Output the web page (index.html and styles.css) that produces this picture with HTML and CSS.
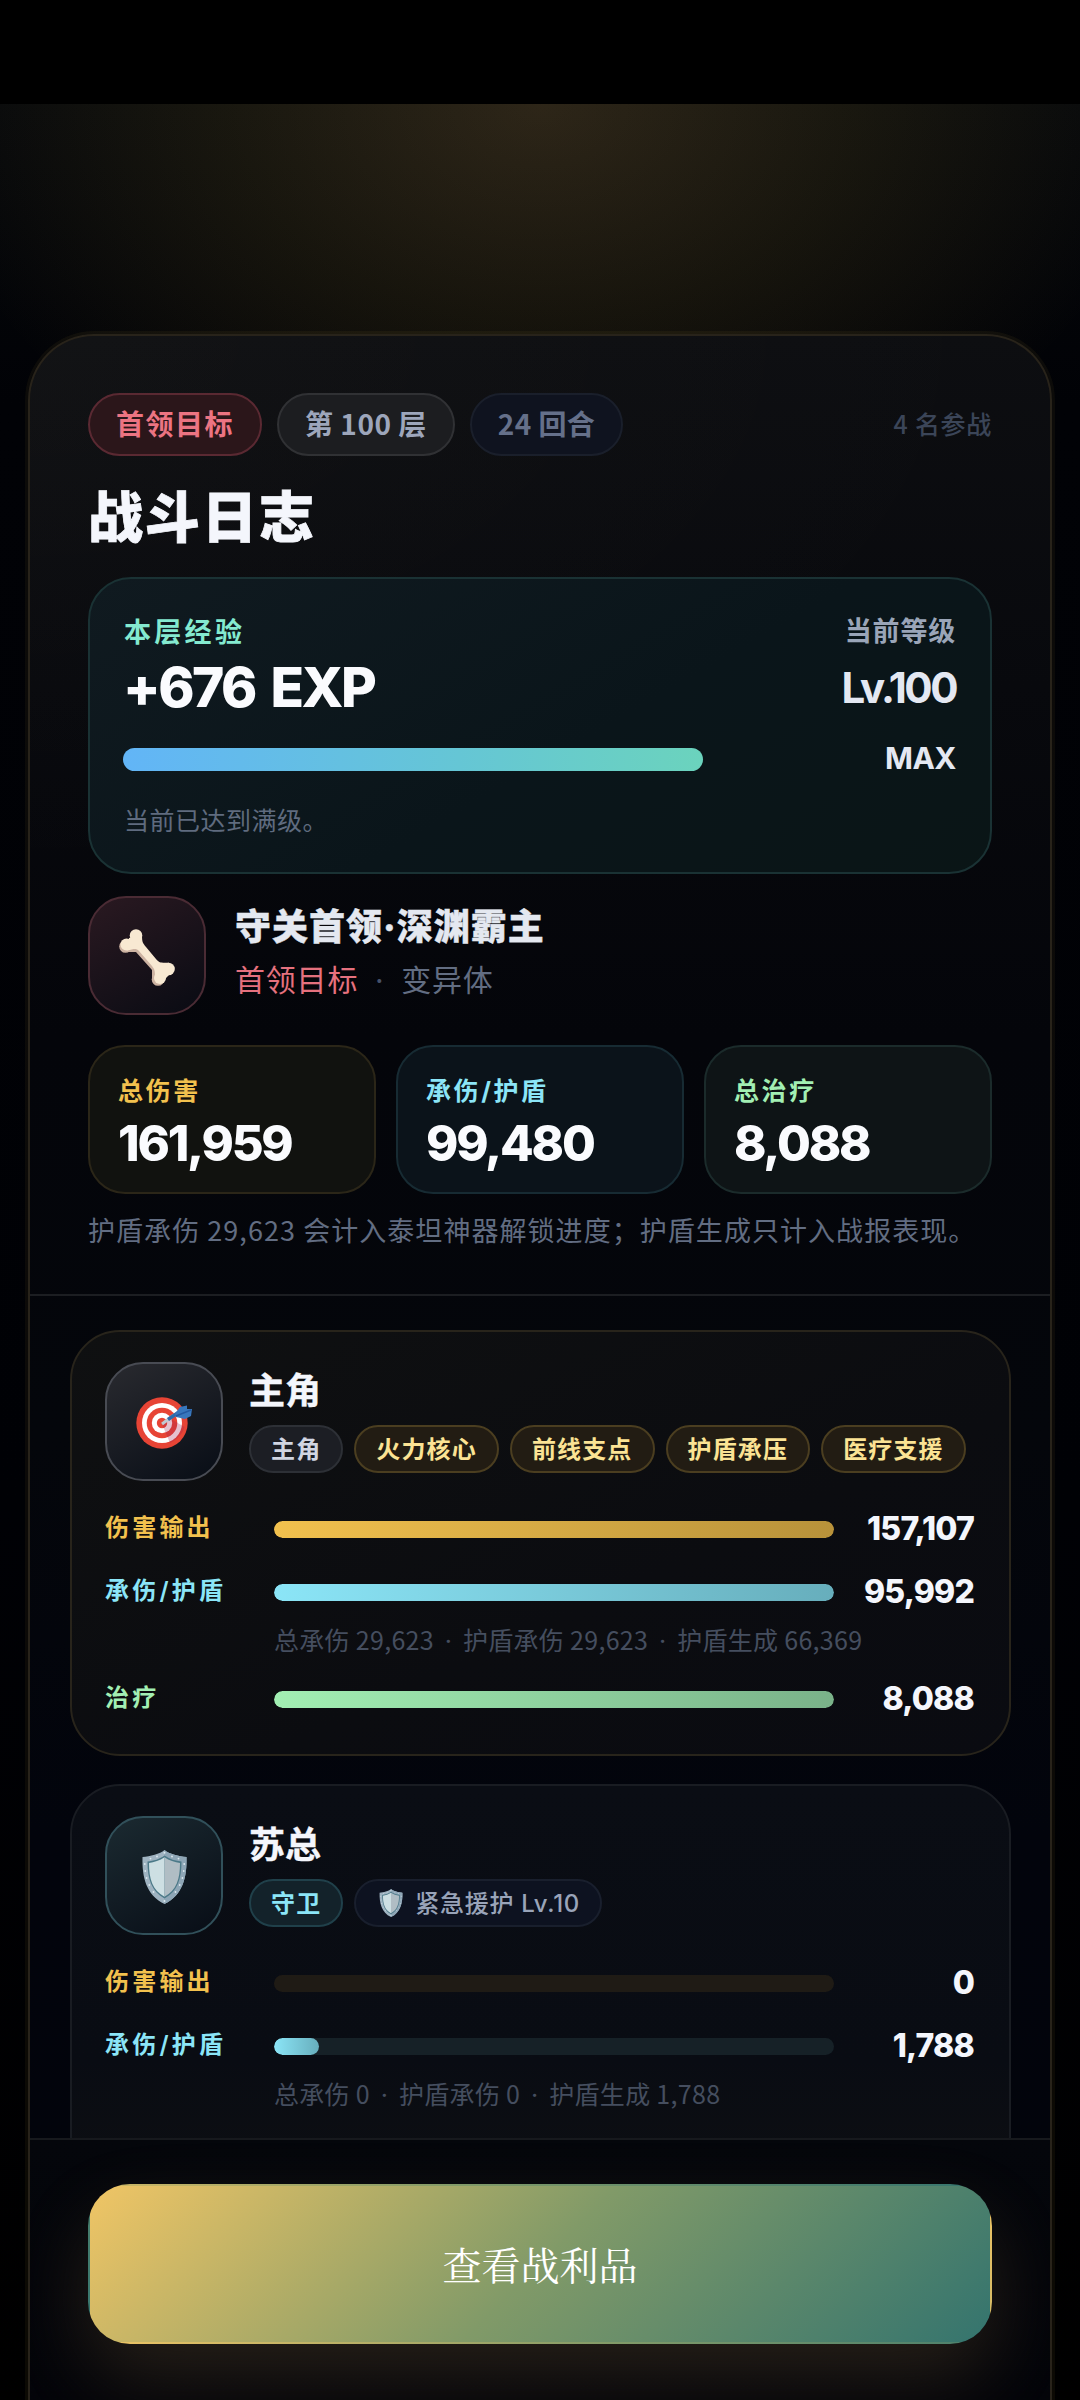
FILE: index.html
```html
<!DOCTYPE html>
<html lang="zh-CN">
<head>
<meta charset="utf-8">
<title>战斗日志</title>
<link rel="stylesheet" href="styles.css">
</head>
<body>
<svg class="defs" width="0" height="0" aria-hidden="true">
  <symbol id="shield" viewBox="0 0 45 54">
    <path d="M22.500 0C18 4 8 6.500.5 7C0 27 4 45 22.500 54C41 45 45 27 44.500 7C37 6.500 27 4 22.500 0Z" fill="#9fb3c1"/>
    <path d="M22.500 0C27 4 37 6.500 44.500 7C45 27 41 45 22.500 54Z" fill="#8ea6b6"/>
    <path d="M22.500 5.500C18 9 11 11 5.500 11.500C5.500 29 9.500 41.500 22.500 48.500C35.500 41.500 39.500 29 39.500 11.500C34 11 27 9 22.500 5.500Z" fill="#4b7988"/>
    <path d="M22.500 7.300C18 10.500 12 12.400 7 12.900C7 29 10.500 40 22.500 46.700Z" fill="#cddfe3"/>
    <path d="M22.500 7.300C27 10.500 33 12.400 38 12.900C38 29 34.500 40 22.500 46.700Z" fill="#b0bdc4"/>
    <g fill="#dce9ee"><circle cx="22.500" cy="2.800" r="1"/><circle cx="15" cy="6.500" r=".9"/><circle cx="30" cy="6.500" r=".9"/><circle cx="8.500" cy="8.600" r=".9"/><circle cx="36.500" cy="8.600" r=".9"/><circle cx="2.800" cy="14" r=".9"/><circle cx="42.200" cy="14" r=".9"/><circle cx="3.300" cy="21" r=".9"/><circle cx="41.700" cy="21" r=".9"/><circle cx="4.600" cy="28" r=".9"/><circle cx="40.400" cy="28" r=".9"/><circle cx="7.300" cy="35" r=".9"/><circle cx="37.700" cy="35" r=".9"/><circle cx="11.500" cy="42" r=".9"/><circle cx="33.500" cy="42" r=".9"/><circle cx="22.500" cy="51" r="1"/></g>
  </symbol>
</svg>

<div class="screen">
  <section class="panel">
    <header class="summary">
      <div class="meta">
        <span class="pill pill-boss">首领目标</span>
        <span class="pill pill-floor">第 100 层</span>
        <span class="pill pill-round">24 回合</span>
        <span class="count">4 名参战</span>
      </div>
      <h1 class="title">战斗日志</h1>

      <div class="exp">
        <div class="exp-top">
          <div>
            <div class="exp-label">本层经验</div>
            <div class="exp-value">+676 EXP</div>
          </div>
          <div class="level">
            <div class="level-label">当前等级</div>
            <div class="level-value">Lv.100</div>
          </div>
        </div>
        <div class="exp-progress"><div class="exp-bar"></div><span class="exp-max">MAX</span></div>
        <div class="exp-note">当前已达到满级。</div>
      </div>

      <div class="boss">
        <div class="avatar avatar-boss">
          <svg width="56" height="57" viewBox="0 0 56 57">
            <g fill="#cdb3a2"><circle cx="6.500" cy="17.500" r="6.300"/><circle cx="39" cy="50.500" r="6.300"/><path d="M6 23L17 23L33 41L33 51L45 51L46 41L16 12Z"/></g>
            <g fill="#f8e9d2"><circle cx="17" cy="6.500" r="6.300"/><circle cx="7.500" cy="15.500" r="6"/><circle cx="49.500" cy="40" r="6.300"/><circle cx="41" cy="49" r="6"/><path d="M23 6C23 14 24 14 27 18L37 30C41 34.500 42 33.500 50 33.700L50 46L45 51L36 49C36 42 36 41 33 37L20 22C17 19 15 20 8 21.500L10 9Z"/></g>
          </svg>
        </div>
        <div class="boss-info">
          <div class="boss-name">守关首领·深渊霸主</div>
          <div class="boss-tags"><span class="boss-type">首领目标</span><span class="dot">·</span><span>变异体</span></div>
        </div>
      </div>

      <div class="stats">
        <div class="stat gold"><div class="stat-label">总伤害</div><div class="stat-value">161,959</div></div>
        <div class="stat cyan"><div class="stat-label">承伤/护盾</div><div class="stat-value">99,480</div></div>
        <div class="stat green"><div class="stat-label">总治疗</div><div class="stat-value">8,088</div></div>
      </div>
      <p class="note">护盾承伤 29,623 会计入泰坦神器解锁进度；护盾生成只计入战报表现。</p>
    </header>

    <main class="members">
      <article class="member member-lead">
        <div class="member-head">
          <div class="avatar avatar-lead">
            <svg width="56" height="52" viewBox="0 0 56 52">
              <circle cx="26" cy="26" r="25.700" fill="#e74435"/><circle cx="26" cy="26" r="20" fill="#fff"/><circle cx="26" cy="26" r="15.300" fill="#e74435"/><circle cx="26" cy="26" r="10.200" fill="#fff"/><circle cx="26" cy="26" r="5.200" fill="#e74435"/>
              <path d="M26 27L34 46C42 42 47 36 48.500 30L35 22Z" fill="#a21f50" opacity=".28"/>
              <path d="M26 27L38 18" stroke="#bfc9d2" stroke-width="3"/>
              <path d="M32 22.500L43 15" stroke="#2c6bad" stroke-width="3.500"/>
              <path d="M39 17L44 10L51 8.500L51 12L56 12L55 19L49 22L40 20Z" fill="#3877bd"/>
              <path d="M40 19L55 13" stroke="#2459a0" stroke-width="1.500"/>
            </svg>
          </div>
          <div>
            <h2 class="name">主角</h2>
            <div class="chips"><span class="chip chip-self">主角</span><span class="chip chip-gold">火力核心</span><span class="chip chip-gold">前线支点</span><span class="chip chip-gold">护盾承压</span><span class="chip chip-gold">医疗支援</span></div>
          </div>
        </div>
        <div class="row gold"><span class="label">伤害输出</span><div class="track"><div class="fill" style="width:100%"></div></div><span class="value">157,107</span></div>
        <div class="row cyan"><span class="label">承伤/护盾</span><div class="track"><div class="fill" style="width:100%"></div></div><span class="value">95,992</span></div>
        <div class="detail">总承伤 29,623<span class="sep">·</span>护盾承伤 29,623<span class="sep">·</span>护盾生成 66,369</div>
        <div class="row green"><span class="label">治疗</span><div class="track"><div class="fill" style="width:100%"></div></div><span class="value">8,088</span></div>
      </article>

      <article class="member">
        <div class="member-head">
          <div class="avatar avatar-guard"><svg width="45" height="54"><use href="#shield"/></svg></div>
          <div>
            <h2 class="name">苏总</h2>
            <div class="chips"><span class="chip chip-guard">守卫</span><span class="chip chip-skill"><svg width="24" height="28"><use href="#shield"/></svg>紧急援护 Lv.10</span></div>
          </div>
        </div>
        <div class="row gold"><span class="label">伤害输出</span><div class="track"></div><span class="value">0</span></div>
        <div class="row cyan"><span class="label">承伤/护盾</span><div class="track"><div class="fill" style="width:8%"></div></div><span class="value">1,788</span></div>
        <div class="detail">总承伤 0<span class="sep">·</span>护盾承伤 0<span class="sep">·</span>护盾生成 1,788</div>
      </article>
    </main>

    <footer class="actions"><button class="loot" type="button">查看战利品</button></footer>
  </section>
</div>
</body>
</html>
```
FILE: styles.css
```css
* { box-sizing: border-box; }
body {
  display: flow-root;
  margin: 0;
  background: #000;
  font-family: Inter, "Noto Sans CJK SC", sans-serif;
  color: #f4f6fc;
}
h1, h2, p { margin: 0; }
.defs { position: absolute; }

.screen {
  height: 2296px;
  margin-top: 104px;
  padding: 230px 28px 0;
  overflow: hidden;
  background:
    radial-gradient(ellipse 620px 440px at 50% 0, rgba(240, 185, 90, .17), rgba(220, 180, 60, .09) 50%, rgba(200, 170, 50, 0)),
    linear-gradient(180deg, #06080b 0, #010206 300px, #000105 1400px, #000 100%);
}

.panel {
  display: flex;
  flex-direction: column;
  height: 2066px;
  border: 2px solid #28231a;
  border-bottom: 0;
  border-radius: 66px 66px 0 0;
  overflow: hidden;
  box-shadow: 0 0 0 3px rgba(240, 190, 80, .05);
  background:
    radial-gradient(ellipse 1000px 560px at 0 0, rgba(255, 240, 200, .024), rgba(255, 245, 220, 0)),
    linear-gradient(180deg, #0d0e11 0, #08090d 350px, #04050a 700px, #04060b 1100px, #02040c 1500px, #02040b 100%);
}

.summary {
  padding: 57px 58px 45px;
  border-bottom: 2px solid #1c1e22;
}
.meta { display: flex; align-items: center; gap: 15px; height: 63px; }
.pill {
  height: 63px;
  padding: 0 26px;
  border: 2px solid;
  border-radius: 32px;
  font-family: "Noto Sans CJK SC", sans-serif;
  font-size: 28px;
  font-weight: 700;
  line-height: 57px;
  letter-spacing: 1.500px;
  white-space: nowrap;
}
.pill-boss { color: #ec7482; background: #2b161a; border-color: #5a2932; }
.pill-floor { color: #9da6bb; background: #1c1d20; border-color: #303134; letter-spacing: .5px; }
.pill-round { color: #65708a; background: #0f131f; border-color: #1a1f2b; letter-spacing: .4px; }
.count { margin-left: auto; font-family: "Noto Sans CJK SC", sans-serif; font-size: 25px; font-weight: 500; letter-spacing: .7px; color: #3b4558; line-height: 58px; margin-bottom: 4px; }

.title { margin-top: 28px; font-size: 55px; font-weight: 900; line-height: 66px; letter-spacing: 2px; -webkit-text-stroke: .8px; }

.exp {
  height: 297px;
  margin-top: 27px;
  padding: 36px 34px 0 34px;
  border: 2px solid #1a3234;
  border-radius: 43px;
  background: linear-gradient(150deg, #101a20 0, #0a151a 55%, #0a1516 100%);
}
.exp-top { display: flex; justify-content: space-between; height: 102px; }
.exp-label { padding-top: 1px; font-size: 27px; font-weight: 700; letter-spacing: 3.300px; line-height: 34px; color: #84ead0; }
.exp-value { margin: 7px 0 0 -1px; font-size: 55px; font-weight: 800; line-height: 60px; letter-spacing: -2.500px; word-spacing: 6px; color: #fafbfe; }
.level { margin-top: -2px; text-align: right; }
.level-label { padding-top: 2px; font-size: 27px; font-weight: 600; line-height: 34px; letter-spacing: .8px; color: #9aa5b8; }
.level-value { margin: 8px 0 0; font-size: 42px; font-weight: 700; line-height: 62px; letter-spacing: -2.500px; color: #e4e8f2; }
.exp-progress { display: flex; justify-content: space-between; margin-top: 31px; height: 23px; margin-left: -1px; }
.exp-bar { width: 580px; border-radius: 12px; background: linear-gradient(90deg, #62b5f7, #65c6d5 58%, #6bd3bd); }
.exp-max { font-size: 30px; font-weight: 700; line-height: 21px; letter-spacing: -.5px; color: #e4e8f2; }
.exp-note { margin-top: 33px; font-size: 25px; line-height: 34px; letter-spacing: .5px; color: #5f6b7f; }

.avatar {
  display: flex;
  flex: none;
  align-items: center;
  justify-content: center;
  width: 118px;
  height: 119px;
  border: 2px solid;
  border-radius: 38px;
}
.avatar svg { margin-top: 3px; }
.avatar-boss { border-color: #4a2b34; background: linear-gradient(150deg, #2a1921, #090b13); }
.avatar-lead { border-color: #484b53; background: linear-gradient(150deg, #292a2f, #080d16); }
.avatar-guard { border-color: #31505a; background: linear-gradient(150deg, #1b2a31, #080d16); }

.boss { display: flex; gap: 29px; margin-top: 22px; }
.boss-info { padding-top: 9px; }
.boss-name { font-size: 36px; font-weight: 800; line-height: 44px; letter-spacing: 1px; color: #e4e8f0; -webkit-text-stroke: .4px; }
.boss-tags { display: flex; margin-top: 11px; font-size: 30px; line-height: 40px; letter-spacing: .8px; color: #626d82; }
.boss-type { color: #e5717e; }
.dot { width: 43px; text-align: center; color: #46516a; }

.gold { --c: #f2c14e; --end: #b8923a; --track: #1f1b15; --bg: #11120f; --line: #2b2618; }
.cyan { --c: #8be5f7; --end: #67aebc; --track: #162127; --bg: #0b131a; --line: #172b33; }
.green { --c: #a2efb3; --end: #7ab289; --track: #17221c; --bg: #0e1416; --line: #1b2b2b; }

.stats { display: grid; grid-template-columns: repeat(3, 1fr); gap: 20px; margin-top: 30px; }
.stat {
  height: 149px;
  padding: 28px 28px 0;
  border: 2px solid var(--line);
  border-radius: 37px;
  background: var(--bg);
}
.stat-label { font-size: 25px; font-weight: 700; line-height: 32px; letter-spacing: 2.600px; color: var(--c); }
.stat-value { margin-top: 11px; font-size: 49px; font-weight: 800; line-height: 52px; letter-spacing: -2.200px; color: #fafbfe; }
.note { margin-top: 17px; font-family: "Noto Sans CJK SC", sans-serif; font-size: 27px; line-height: 38px; letter-spacing: 1.050px; color: #626d82; white-space: nowrap; }

.members { flex: 1; min-height: 0; padding: 34px 39px 0 40px; overflow: hidden; }
.member {
  height: 426px;
  padding: 30px 35px 0 33px;
  border: 2px solid #191c22;
  border-radius: 50px;
  background: linear-gradient(180deg, #0a0d14, #090c13 65%, #0e0f12);
}
.member + .member { margin-top: 28px; }
.member-lead { border-color: #28241b; background: linear-gradient(155deg, #0f1011, #0b0c10 60%, #0a0b11); }
.member-head { display: flex; gap: 26px; height: 119px; margin-bottom: 30px; }
.name { margin-top: 8px; font-size: 36px; font-weight: 700; line-height: 42px; -webkit-text-stroke: .4px; }
.chips { display: flex; gap: 11px; margin-top: 13px; }
.chip {
  display: flex;
  align-items: center;
  height: 48px;
  padding: 0 20px 4px;
  border: 2px solid;
  border-radius: 24px;
  font-size: 24px;
  font-weight: 600;
  letter-spacing: 1.150px;
  white-space: nowrap;
}
.chip svg { margin: 3px 12px 0 3px; }
.chip-self { color: #d0d5e2; background: #1c1e24; border-color: #2d3036; }
.chip-gold { color: #fbe394; background: #221c13; border-color: #4b3e20; }
.chip-guard { color: #8be5f7; background: #13222a; border-color: #20404a; }
.chip-skill { color: #99a4b9; background: #0d1220; border-color: #191f2d; font-weight: 500; letter-spacing: .7px; }

.row {
  display: grid;
  grid-template-columns: 169px 560px 1fr;
  align-items: center;
  height: 37px;
}
.row + .row { margin-top: 26px; }
.label { margin-top: -3px; font-size: 24px; font-weight: 600; letter-spacing: 3.200px; color: var(--c); line-height: 34px; }
.track { height: 17px; border-radius: 9px; overflow: hidden; background: var(--track); }
.fill { height: 100%; border-radius: 9px; background: linear-gradient(90deg, var(--c), var(--end)); }
.value { margin-top: -2px; text-align: right; font-size: 32px; font-weight: 800; letter-spacing: -.8px; }
.detail { margin: 11px 0 25px 169px; font-family: "Noto Sans CJK SC", sans-serif; font-size: 25px; line-height: 34px; letter-spacing: .3px; color: #454e5f; white-space: nowrap; }
.sep { display: inline-block; width: 29px; text-align: center; font-family: Inter, sans-serif; line-height: 20px; }

.actions {
  flex: none;
  height: 262px;
  padding: 44px 58px 0;
  border-top: 2px solid #17191d;
  background: linear-gradient(180deg, #04060b, #030409);
}
.loot {
  display: block;
  width: 100%;
  height: 160px;
  padding-bottom: 4px;
  border: 2px solid transparent;
  border-radius: 42px;
  background: linear-gradient(135deg, #f0c565, #819a68 50%, #34746e);
  box-shadow: 0 34px 80px rgba(240, 190, 110, .15);
  color: #fff;
  font-family: "Noto Serif CJK SC", "Noto Serif SC", "Source Han Serif SC", "Liberation Serif", "Noto Sans CJK SC", serif;
  font-size: 39px;
  font-weight: 400;
}
```
